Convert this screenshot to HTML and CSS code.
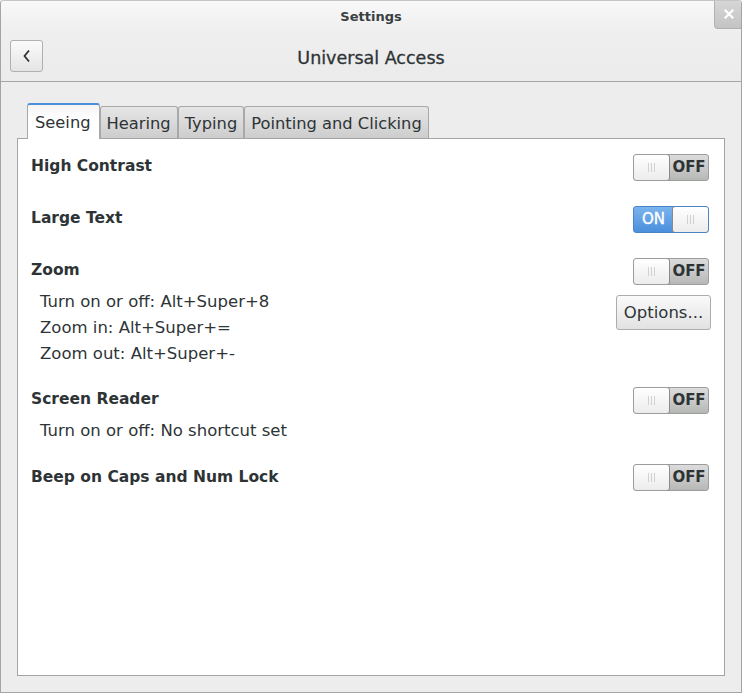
FILE: index.html
```html
<!DOCTYPE html>
<html>
<head>
<meta charset="utf-8">
<link rel="stylesheet" href="styles.css">
</head>
<body>
<div class="window">
  <div class="titlebar">
    <span class="title">Settings</span>
    <div class="close"><svg width="10" height="10" viewBox="0 0 10 10"><path d="M1.5 1.5 L8.5 8.5 M8.5 1.5 L1.5 8.5" stroke="#fff" stroke-width="2.2" stroke-linecap="square"/></svg></div>
  </div>
  <div class="headerbar">
    <button class="back"><svg width="10" height="14" viewBox="0 0 10 14"><path d="M7 1.5 L2.5 7 L7 12.5" fill="none" stroke="#2e3436" stroke-width="1.8"/></svg></button>
    <h1 class="heading">Universal Access</h1>
    <div class="spacer"></div>
  </div>
  <div class="content">
    <div class="tabs">
      <div class="tab active">Seeing</div>
      <div class="tab">Hearing</div>
      <div class="tab">Typing</div>
      <div class="tab">Pointing and Clicking</div>
    </div>
    <div class="panel">
      <div class="row">
        <span class="label">High Contrast</span>
        <div class="switch off"><div class="knob"><i></i><i></i><i></i></div><span class="state">OFF</span></div>
      </div>
      <div class="row">
        <span class="label">Large Text</span>
        <div class="switch on"><span class="state">ON</span><div class="knob"><i></i><i></i><i></i></div></div>
      </div>
      <div class="row with-sub">
        <span class="label">Zoom</span>
        <div class="switch off"><div class="knob"><i></i><i></i><i></i></div><span class="state">OFF</span></div>
      </div>
      <div class="subblock">
        <div class="sublines">
          <div class="sub">Turn on or off: Alt+Super+8</div>
          <div class="sub">Zoom in: Alt+Super+=</div>
          <div class="sub">Zoom out: Alt+Super+-</div>
        </div>
        <button class="options">Options...</button>
      </div>
      <div class="row with-sub after-sub">
        <span class="label">Screen Reader</span>
        <div class="switch off"><div class="knob"><i></i><i></i><i></i></div><span class="state">OFF</span></div>
      </div>
      <div class="subblock">
        <div class="sublines">
          <div class="sub">Turn on or off: No shortcut set</div>
        </div>
      </div>
      <div class="row after-sub last">
        <span class="label">Beep on Caps and Num Lock</span>
        <div class="switch off"><div class="knob"><i></i><i></i><i></i></div><span class="state">OFF</span></div>
      </div>
    </div>
  </div>
</div>
</body>
</html>
```
FILE: styles.css
```css
html, body {
  margin: 0;
  padding: 0;
  background: #ededed;
}
body {
  font-family: "DejaVu Sans", "Noto Sans", sans-serif;
  color: #2e3436;
}
.window {
  width: 742px;
  height: 693px;
  box-sizing: border-box;
  border: 1px solid #a4a4a4;
  border-top-color: #c4c4c4;
  border-radius: 4px 4px 0 0;
  background: #ededed;
  display: flex;
  flex-direction: column;
  overflow: hidden;
}
.titlebar {
  height: 29px;
  position: relative;
  display: flex;
  align-items: center;
  justify-content: center;
  background: linear-gradient(#f8f8f8, #efefef);
}
.title {
  font-size: 13px;
  font-weight: 700;
  color: #3a3f41;
  margin-top: 1px;
}
.close {
  position: absolute;
  right: -1px;
  top: -1px;
  width: 28px;
  height: 29px;
  box-sizing: border-box;
  border-left: 1px solid #b2b2b2;
  border-bottom: 1px solid #b2b2b2;
  border-bottom-left-radius: 4px;
  background: linear-gradient(#d6d6d6, #c4c4c4);
  display: flex;
  align-items: center;
  justify-content: center;
}
.headerbar {
  height: 52px;
  box-sizing: border-box;
  border-bottom: 1px solid #a7a7a7;
  background: linear-gradient(#efefef, #ebebeb);
  display: flex;
  align-items: flex-start;
  padding: 10px 9px 0;
}
.back {
  width: 33px;
  height: 32px;
  box-sizing: border-box;
  border: 1px solid #b0b0b0;
  border-radius: 3px;
  background: linear-gradient(#fbfbfb, #e4e4e4);
  display: flex;
  align-items: center;
  justify-content: center;
  padding: 0;
  margin: 0;
}
.heading {
  flex: 1;
  margin: 0;
  padding-top: 1px;
  text-align: center;
  font-size: 17.5px;
  font-weight: 400;
  line-height: 34px;
  color: #2e3436;
  -webkit-text-stroke: 0.3px #2e3436;
}
.spacer {
  width: 33px;
}
.content {
  flex: 1;
  display: flex;
  flex-direction: column;
  padding: 21px 16px 16px;
}
.tabs {
  display: flex;
  align-items: flex-end;
  padding-left: 10px;
  height: 35px;
  position: relative;
  z-index: 1;
}
.tab {
  height: 32px;
  box-sizing: border-box;
  padding: 1px 6px 0;
  font-size: 16.3px;
  line-height: 31px;
  color: #2e3436;
  border: 1px solid #a8a8a8;
  border-bottom: none;
  border-radius: 3px 3px 0 0;
  background: linear-gradient(#e6e6e6, #cdcdcd);
}
.tab.active {
  height: 36px;
  margin-bottom: -1px;
  background: linear-gradient(#f4f4f4, #ffffff 40%);
  border-top: 2px solid #4a90d9;
  padding: 0 8px 0 7px;
  line-height: 35px;
}
.panel {
  flex: 1;
  background: #fff;
  border: 1px solid #a4a4a4;
  padding: 15px 15px 0 13px;
}
.row {
  display: flex;
  align-items: center;
  justify-content: space-between;
  height: 26px;
  margin-bottom: 26px;
}
.row.with-sub {
  margin-bottom: 4px;
}
.row.after-sub {
  margin-top: 20px;
}
.row.last {
  margin-top: 20px;
}
.label {
  font-size: 15.5px;
  font-weight: 700;
  margin-top: -3px;
}
.row.last .label {
  margin-top: 0;
}
.subblock {
  display: flex;
  justify-content: space-between;
  align-items: flex-start;
  padding-left: 9px;
  padding-top: 1px;
}
.sub {
  font-size: 16.5px;
  line-height: 26px;
}
.options {
  margin-top: 6px;
  margin-right: -2px;
  width: 95px;
  height: 35px;
  box-sizing: border-box;
  border: 1px solid #acacac;
  border-radius: 3px;
  background: linear-gradient(#fafafa, #e2e2e2);
  font-family: "DejaVu Sans", "Noto Sans", sans-serif;
  font-size: 16.5px;
  color: #2e3436;
  padding: 0;
}
.switch {
  width: 76px;
  height: 27px;
  box-sizing: border-box;
  border: 1px solid #9c9c9c;
  border-radius: 3px;
  display: flex;
  align-items: stretch;
  overflow: hidden;
}
.switch.off {
  background: linear-gradient(#dcdcdc, #b6b8b6);
}
.switch.on {
  background: linear-gradient(#7ab4ee, #4a8fdc);
  border-color: #4a84c6;
}
.knob {
  width: 37px;
  box-sizing: border-box;
  border: 1px solid #8a8a8a;
  border-radius: 3px;
  margin: -1px;
  background: linear-gradient(#ffffff, #ececec);
  display: flex;
  align-items: center;
  justify-content: center;
  gap: 2px;
}
.knob i {
  display: block;
  width: 1px;
  height: 9px;
  background: #d0d0d0;
}
.state {
  flex: 1;
  text-align: center;
  font-size: 15px;
  font-weight: 700;
  line-height: 25px;
}
.switch.off .state {
  color: #2e3436;
  padding-left: 1px;
}
.switch.on .state {
  color: #fff;
  font-weight: 400;
  -webkit-text-stroke: 0.4px #fff;
}
```
